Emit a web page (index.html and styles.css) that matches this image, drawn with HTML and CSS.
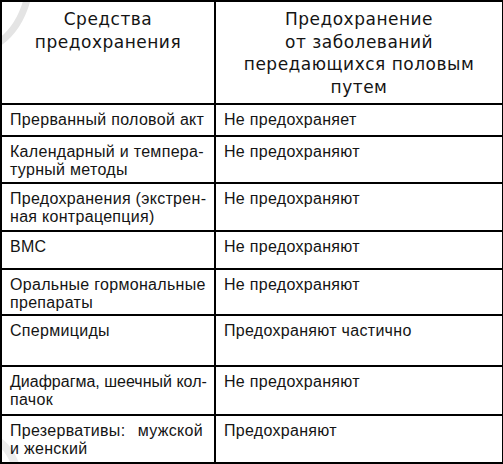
FILE: index.html
```html
<!DOCTYPE html>
<html lang="ru">
<head>
<meta charset="utf-8">
<link rel="stylesheet" href="styles.css">
</head>
<body>
<div class="page">
<svg class="mark" width="80" height="60" viewBox="0 0 80 60"><path d="M27 0 Q19 28 0 42" fill="none" stroke="#e4e4e4" stroke-width="7"/></svg>
<svg class="mark2" width="30" height="30" viewBox="0 0 30 30"><path d="M0 6 Q10 14 16 30" fill="none" stroke="#ececec" stroke-width="8"/></svg>
<table class="tbl">
<colgroup><col class="c1"><col class="c2"></colgroup>
<thead>
<tr class="r-h"><th>Средства<br>предохранения</th><th>Предохранение<br>от заболеваний<br>передающихся половым<br>путем</th></tr>
</thead>
<tbody>
<tr class="r1"><td><span class="ln full">Прерванный половой акт</span></td><td>Не предохраняет</td></tr>
<tr class="r2"><td><span class="ln full">Календарный и темпера-</span><span class="ln">турный методы</span></td><td>Не предохраняют</td></tr>
<tr class="r3"><td><span class="ln full">Предохранения (экстрен-</span><span class="ln">ная контрацепция)</span></td><td>Не предохраняют</td></tr>
<tr class="r4"><td>ВМС</td><td>Не предохраняют</td></tr>
<tr class="r5"><td><span class="ln full">Оральные гормональные</span><span class="ln">препараты</span></td><td>Не предохраняют</td></tr>
<tr class="r6"><td>Спермициды</td><td>Предохраняют частично</td></tr>
<tr class="r7"><td><span class="ln full tightline">Диафрагма, шеечный кол-</span><span class="ln">пачок</span></td><td>Не предохраняют</td></tr>
<tr class="r8"><td><span class="ln full">Презервативы: мужской</span><span class="ln">и женский</span></td><td>Предохраняют</td></tr>
</tbody>
</table>
</div>
</body>
</html>
```
FILE: styles.css
```css
html, body { margin: 0; padding: 0; background: #fff; }
.page { position: relative; width: 503px; height: 464px; overflow: hidden; }
.mark { position: absolute; left: 0; top: 0; z-index: 0; }
.mark2 { position: absolute; left: 0; top: 436px; z-index: 0; }
.tbl {
  position: relative;
  z-index: 1;
  border-collapse: collapse;
  width: 502px;
  table-layout: fixed;
  font-family: "Liberation Sans", Arial, sans-serif;
  color: #141414;
}
.c1 { width: 214px; }
.c2 { width: 288px; }
.tbl th, .tbl td { border: 2.5px solid #000; vertical-align: top; }
.tbl th {
  font-family: "DejaVu Sans", sans-serif;
  font-weight: normal;
  font-size: 17px;
  line-height: 22.5px;
  text-align: center;
  padding: 6px 2px 0;
  letter-spacing: 0.5px;
}
.tbl td {
  font-size: 16px;
  line-height: 18px;
  letter-spacing: 0.3px;
  padding: 6px 4px 0 8px;
  text-align: left;
}
.ln { display: block; white-space: nowrap; }
.full { width: 193px; text-align: justify; text-align-last: justify; }
.tightline { letter-spacing: 0; }
.r-h { height: 103px; }
.r1 { height: 32px; }
.r2 { height: 47px; }
.r3 { height: 48px; }
.r4 { height: 38px; }
.r5 { height: 46px; }
.r6 { height: 51px; }
.r7 { height: 49px; }
.r8 { height: 48px; }
```
